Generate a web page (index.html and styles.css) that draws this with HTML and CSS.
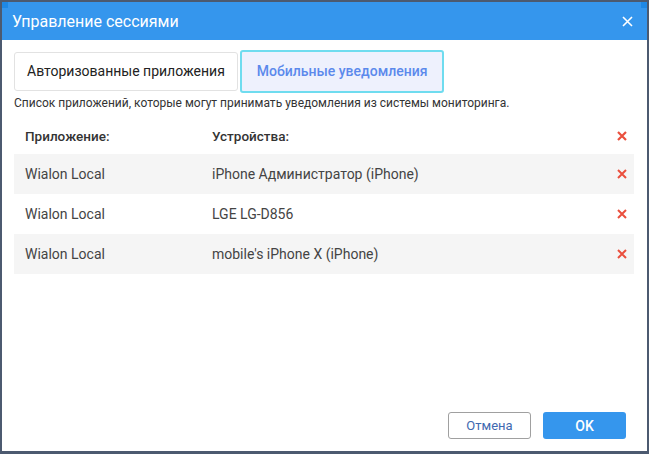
FILE: index.html
```html
<!DOCTYPE html>
<html lang="ru">
<head>
    <meta charset="UTF-8">
    <title>Управление сессиями</title>
    <link rel="stylesheet" href="styles.css">
</head>
<body>
    <div class="dialog">
        <span class="handle handle-left"></span>
        <span class="handle handle-right"></span>
        <div class="dialog-header">
            <span class="dialog-title">Управление сессиями</span>
            <svg class="close" width="11" height="11" viewBox="0 0 11 11">
                <path d="M1 1L10 10M10 1L1 10" stroke="#fff" stroke-width="1.6"/>
            </svg>
        </div>
        <div class="dialog-body">
            <div class="tabs">
                <div class="tab">Авторизованные приложения</div>
                <div class="tab active">Мобильные уведомления</div>
            </div>
            <p class="description">Список приложений, которые могут принимать уведомления из системы мониторинга.</p>
            <div class="table">
                <div class="row head">
                    <span class="col-app">Приложение:</span>
                    <span class="col-device">Устройства:</span>
                    <span class="col-del"><svg width="10" height="10" viewBox="0 0 10 10"><path d="M1 1L9 9M9 1L1 9" stroke="#ea4f3d" stroke-width="2.2"/></svg></span>
                </div>
                <div class="row odd">
                    <span class="col-app">Wialon Local</span>
                    <span class="col-device">iPhone Администратор (iPhone)</span>
                    <span class="col-del"><svg width="10" height="10" viewBox="0 0 10 10"><path d="M1 1L9 9M9 1L1 9" stroke="#ea4f3d" stroke-width="2"/></svg></span>
                </div>
                <div class="row">
                    <span class="col-app">Wialon Local</span>
                    <span class="col-device">LGE LG-D856</span>
                    <span class="col-del"><svg width="10" height="10" viewBox="0 0 10 10"><path d="M1 1L9 9M9 1L1 9" stroke="#ea4f3d" stroke-width="2"/></svg></span>
                </div>
                <div class="row odd">
                    <span class="col-app">Wialon Local</span>
                    <span class="col-device">mobile's iPhone X (iPhone)</span>
                    <span class="col-del"><svg width="10" height="10" viewBox="0 0 10 10"><path d="M1 1L9 9M9 1L1 9" stroke="#ea4f3d" stroke-width="2"/></svg></span>
                </div>
            </div>
        </div>
        <div class="dialog-footer">
            <button class="btn btn-cancel">Отмена</button>
            <button class="btn btn-ok">OK</button>
        </div>
    </div>
</body>
</html>
```

FILE: styles.css
```css
body {
    margin: 0;
    padding: 2px 2px 3px 2px;
    background: #4c5a70;
    font-family: Roboto, "Liberation Sans", sans-serif;
    color: #333;
}

.dialog {
    position: relative;
    height: 449px;
    background: #fff;
    display: flex;
    flex-direction: column;
}

.handle {
    position: absolute;
    top: 0;
    width: 6px;
    height: 6px;
    background: #1e88e5;
}

.handle-left {
    left: 0;
}

.handle-right {
    right: 0;
}

.dialog-header {
    height: 38px;
    background: #3596ed;
    display: flex;
    align-items: center;
    justify-content: space-between;
    padding: 0 14px 0 10px;
}

.dialog-title {
    color: #fff;
    font-size: 16px;
}

.dialog-body {
    flex: 1;
    padding: 10px 13px 0 12px;
}

.tabs {
    display: flex;
    align-items: center;
    gap: 2px;
}

.tab {
    height: 37px;
    line-height: 37px;
    padding: 0 12px;
    border: 1px solid #e2e2e2;
    border-radius: 3px;
    font-size: 14px;
    color: #222;
}

.tab.active {
    height: 39px;
    line-height: 39px;
    padding: 0 15px;
    border: 2px solid #6fdcef;
    background: #eef1fd;
    color: #5b89ec;
    font-weight: 500;
}

.description {
    margin: 3px 0 0;
    font-size: 12px;
    color: #333;
}

.table {
    margin-top: 8px;
}

.row {
    display: flex;
    align-items: center;
    height: 40px;
    font-size: 14px;
    color: #444;
}

.row.head {
    height: 36px;
    font-size: 13.5px;
    font-weight: 500;
    color: #333;
}

.row.odd {
    background: #f5f5f5;
}

.col-app {
    width: 187px;
    padding-left: 11px;
}

.col-device {
    flex: 1;
}

.col-del {
    width: 17px;
    display: flex;
}

.dialog-footer {
    display: flex;
    justify-content: flex-end;
    gap: 12px;
    padding: 0 21px 12px 0;
}

.btn {
    width: 83px;
    height: 27px;
    border-radius: 3px;
    font-family: Roboto, "Liberation Sans", sans-serif;
    font-size: 13px;
    cursor: pointer;
}

.btn-cancel {
    background: #fff;
    border: 1px solid #a0a0a0;
    color: #3f69b0;
}

.btn-ok {
    background: #3596ed;
    border: none;
    color: #fff;
    font-weight: 500;
    font-size: 14px;
}
```
